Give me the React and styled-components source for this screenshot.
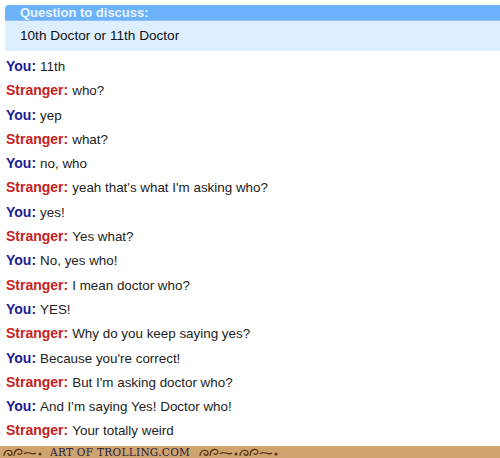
import React from "react";
import styled, { createGlobalStyle } from "styled-components";

const Global = createGlobalStyle`
  html, body { margin: 0; padding: 0; background: #fff; }
  body { width: 500px; height: 458px; overflow: hidden; font-family: "Liberation Sans", Arial, sans-serif; }
`;

const Page = styled.div`
  width: 500px;
  height: 458px;
  display: flex;
  flex-direction: column;
  background: #fff;
`;

const Question = styled.div`
  margin: 5px 0 0 5px;
  display: flex;
  flex-direction: column;
  border-top-left-radius: 4px;
  overflow: hidden;
`;

const QHeader = styled.div`
  height: 15px;
  background: #6cb2fd;
  border-bottom: 1px solid #8fc3f5;
  color: #eaf4ff;
  font-weight: bold;
  font-size: 13px;
  line-height: 15px;
  padding-left: 15px;
`;

const QBody = styled.div`
  height: 30px;
  background: #ddeefe;
  color: #111;
  font-size: 13.6px;
  line-height: 30px;
  padding-left: 15px;
`;

const Log = styled.div`
  flex: 1;
  padding: 3px 0 0 6px;
  display: flex;
  flex-direction: column;
`;

const Line = styled.div`
  height: 24.3px;
  line-height: 24.3px;
  font-size: 13.4px;
  color: #222;
  white-space: nowrap;
`;

const Who = styled.span`
  font-weight: bold;
  font-size: 14px;
  color: ${(p) => (p.$you ? "#1c1c94" : "#c8201e")};
  margin-right: 4px;
`;

const Footer = styled.div`
  height: 12px;
  background: #cfa36e;
  display: flex;
  align-items: center;
  padding-left: 2px;
  overflow: hidden;
`;

const FooterText = styled.span`
  font-family: "DejaVu Serif", "Liberation Serif", serif;
  text-transform: uppercase;
  font-size: 10.5px;
  letter-spacing: 0.3px;
  color: #1e2048;
  line-height: 12px;
  margin: 0 8px;
`;

const Swirl = ({ width }) => (
  <svg width={width} height="12" viewBox={`0 0 ${width} 12`}>
    <g fill="none" stroke="#5a3a1e" strokeWidth="1.3">
      <path d="M2 10 C2 3 10 3 10 7 C10 10 6 10 6 7" />
      <path d="M12 10 C12 2 20 2 20 6 C20 9 16 9 16 7" />
      <path d="M22 8 C26 4 30 10 34 7" />
    </g>
    <circle cx="38" cy="8" r="1.5" fill="#5a3a1e" />
  </svg>
);

const messages = [
  [true, "11th"],
  [false, "who?"],
  [true, "yep"],
  [false, "what?"],
  [true, "no, who"],
  [false, "yeah that's what I'm asking who?"],
  [true, "yes!"],
  [false, "Yes what?"],
  [true, "No, yes who!"],
  [false, "I mean doctor who?"],
  [true, "YES!"],
  [false, "Why do you keep saying yes?"],
  [true, "Because you're correct!"],
  [false, "But I'm asking doctor who?"],
  [true, "And I'm saying Yes! Doctor who!"],
  [false, "Your totally weird"],
];

export default function App() {
  return (
    <Page>
      <Global />
      <Question>
        <QHeader>Question to discuss:</QHeader>
        <QBody>10th Doctor or 11th Doctor</QBody>
      </Question>
      <Log>
        {messages.map(([you, text], i) => (
          <Line key={i}>
            <Who $you={you}>{you ? "You:" : "Stranger:"}</Who>
            {text}
          </Line>
        ))}
      </Log>
      <Footer>
        <Swirl width={40} />
        <FooterText>Art of Trolling.com</FooterText>
        <Swirl width={40} />
        <Swirl width={40} />
      </Footer>
    </Page>
  );
}
